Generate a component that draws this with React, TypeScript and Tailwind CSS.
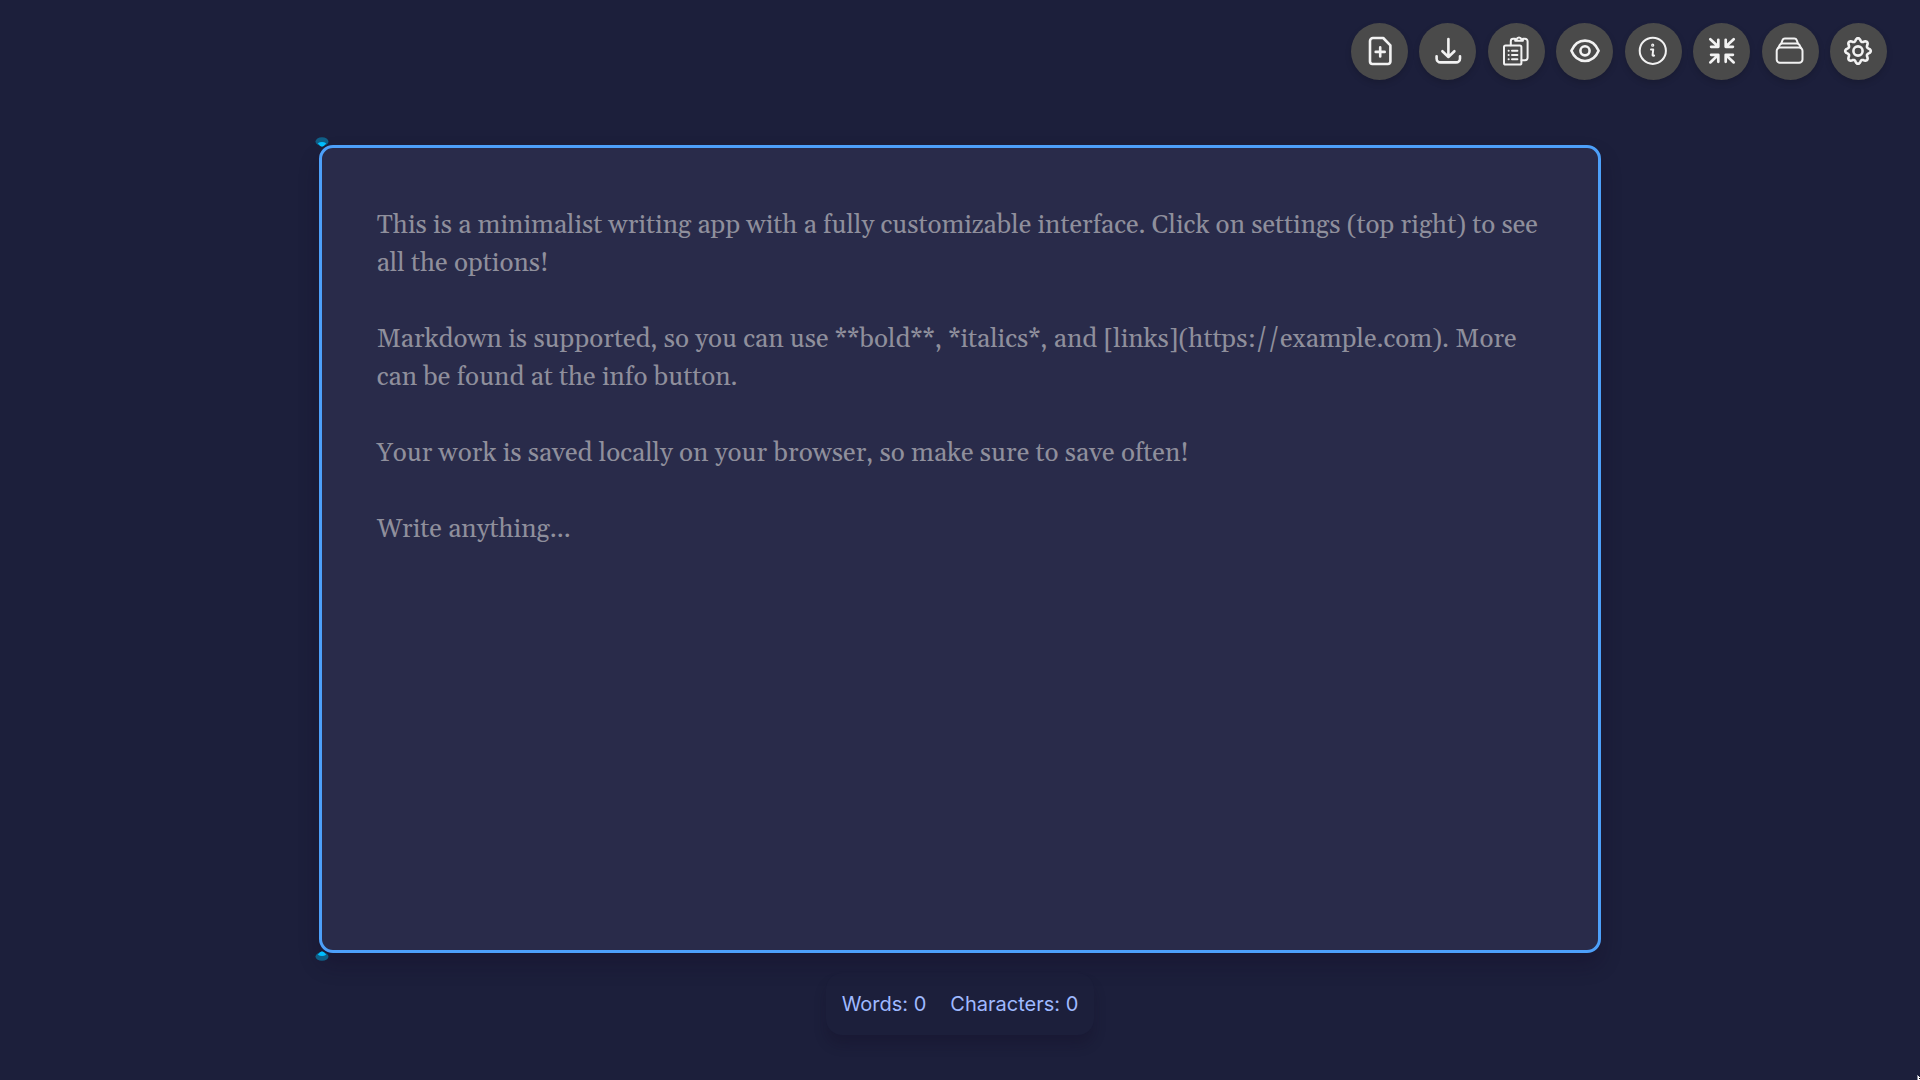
import { useState, type ReactNode } from "react";

const PLACEHOLDER = `This is a minimalist writing app with a fully customizable interface. Click on settings (top right) to see all the options!

Markdown is supported, so you can use **bold**, *italics*, and [links](https://example.com). More can be found at the info button.

Your work is saved locally on your browser, so make sure to save often!

Write anything...`;

// Outline of an eight-toothed gear centred on (16, 16).
const gearPath =
  Array.from({ length: 96 }, (_, i) => {
    const a = (i / 96) * Math.PI * 2;
    const wave = Math.cos(a * 8);
    const r = 11.3 + 1.5 * Math.sign(wave) * Math.pow(Math.abs(wave), 0.8);
    return `${i ? "L" : "M"}${(16 + r * Math.sin(a)).toFixed(2)} ${(16 - r * Math.cos(a)).toFixed(2)}`;
  }).join("") + "Z";

const tools: { label: string; stroke: number; icon: ReactNode }[] = [
  {
    label: "New document",
    stroke: 2.6,
    icon: (
      <>
        <path d="M9 3h10.2L26.4 10.4V26.6a2.4 2.4 0 0 1-2.4 2.4H8.4A2.4 2.4 0 0 1 6 26.6V6a3 3 0 0 1 3-3Z" />
        <path d="M16.2 12.4v9M11.7 16.9h9" />
      </>
    ),
  },
  {
    label: "Download",
    stroke: 2.6,
    icon: (
      <>
        <path d="M16.4 4v17.6M10.4 16.2l6 5.8 6-5.8" />
        <path d="M4.6 21.2v2.2a4 4 0 0 0 4 4h15.4a4 4 0 0 0 4-4v-2.2" />
      </>
    ),
  },
  {
    label: "Copy",
    stroke: 2,
    icon: (
      <>
        <rect x="4" y="10.4" width="17.4" height="19.2" rx="1.6" />
        <path d="M10.8 10.2V6.2a2.4 2.4 0 0 1 2.4-2.4h2M23 3.8h2a2.6 2.6 0 0 1 2.6 2.6v16.2a2.6 2.6 0 0 1-2.6 2.6h-3.4" />
        <path d="M15.2 5.8V4.4h1.4a2.5 2.5 0 0 1 4.8 0h1.5v1.4Z" />
        <path d="M8.6 15.8h.1M8.6 19.9h.1M8.6 24.2h.1M12 15.8h5.4M12 19.9h5.4M12 24.2h5.4" />
      </>
    ),
  },
  {
    label: "Preview",
    stroke: 2.6,
    icon: (
      <>
        <path d="M2.4 15.8C5 9.6 9.8 5.6 16 5.6S27 9.6 29.6 15.8C27 22 22.2 26 16 26S5 22 2.4 15.8Z" />
        <circle cx="16" cy="15.8" r="4.6" />
      </>
    ),
  },
  {
    label: "Info",
    stroke: 2,
    icon: (
      <>
        <circle cx="15.8" cy="15.8" r="13.1" />
        <path d="M14 14.6h2.2l-.6 5.4q-.1 1.1 1.5.5" />
        <circle cx="15.7" cy="10.2" r=".6" />
      </>
    ),
  },
  {
    label: "Focus mode",
    stroke: 2.7,
    icon: (
      <>
        <path d="M4.3 4.2l7.8 7.4M12.3 4.8v7H5.1" />
        <path d="M27.7 4.2l-7.8 7.4M19.7 4.8v7h7.2" />
        <path d="M4.3 27.4l7.8-7.4M12.3 26.8v-7H5.1" />
        <path d="M27.7 27.4l-7.8-7.4M19.7 26.8v-7h7.2" />
      </>
    ),
  },
  {
    label: "Library",
    stroke: 2,
    icon: (
      <>
        <rect x="2.7" y="12.4" width="25.8" height="15.4" rx="3.4" />
        <path d="M4.1 13.2L5.9 9.8a2.6 2.6 0 0 1 2.4-1.4h14.6a2.6 2.6 0 0 1 2.4 1.4l1.8 3.4" />
        <path d="M7.3 8.4l1.2-3.2a2.5 2.5 0 0 1 2.3-1.6h9.6a2.5 2.5 0 0 1 2.3 1.6l1.2 3.2" />
      </>
    ),
  },
  {
    label: "Settings",
    stroke: 2.6,
    icon: (
      <>
        <path d={gearPath} />
        <circle cx="16" cy="16" r="4.6" />
      </>
    ),
  },
];

function Handle({ flipped = false }: { flipped?: boolean }) {
  return (
    <svg
      aria-hidden="true"
      viewBox="0 0 14 10"
      className={
        flipped
          ? "absolute -bottom-2 -left-1 h-[10px] w-[14px] rotate-180"
          : "absolute -top-2 -left-1 h-[10px] w-[14px]"
      }
    >
      <ellipse cx="7" cy="4.5" rx="6.5" ry="4.3" fill="#0f5f87" />
      <path d="M2.8 6.3Q7 3.6 11.2 6.3Q9 9.6 7 9.8Q5 9.6 2.8 6.3Z" fill="#00bfff" />
    </svg>
  );
}

export default function App() {
  const [text, setText] = useState("");
  const words = text.trim() ? text.trim().split(/\s+/).length : 0;

  return (
    <div className="relative flex min-h-screen flex-col items-center bg-[#1c1f3b] font-['Inter',sans-serif]">
      <header className="flex w-full justify-end pt-[23px] pr-[33px]">
        <nav aria-label="Tools" className="flex w-[536px] justify-between">
          {tools.map((tool) => (
            <button
              key={tool.label}
              type="button"
              aria-label={tool.label}
              className="flex size-[57px] items-center justify-center rounded-full bg-[#4a4a4a] pb-px text-[#f2f2f2] shadow-[0_3px_6px_rgba(0,0,0,0.15)]"
            >
              <svg
                viewBox="0 0 32 32"
                className="size-8"
                fill="none"
                stroke="currentColor"
                strokeWidth={tool.stroke}
                strokeLinecap="round"
                strokeLinejoin="round"
              >
                {tool.icon}
              </svg>
            </button>
          ))}
        </nav>
      </header>

      <main className="relative mt-[65px] flex h-[74.8vh] w-[66.8%]">
        <textarea
          aria-label="Document"
          value={text}
          onChange={(e) => setText(e.target.value)}
          placeholder={PLACEHOLDER}
          className="w-full resize-none rounded-[14px] border-3 border-[#4da0fa] bg-[#292b4a] px-[55px] pt-[59px] pb-[55px] font-['Georgia','Gelasio','Liberation_Serif',serif] text-[26px] leading-[38px] text-gray-200 shadow-[0_12px_20px_rgba(20,10,35,0.3)] outline-none placeholder:text-[#8f8f9c]"
        />
        <Handle />
        <Handle flipped />
      </main>

      <footer className="mt-5 flex gap-6 rounded-2xl bg-[#1c1f3b] px-4 py-4 text-[20px] leading-[30px] text-[#9fb9ff] shadow-[0_10px_12px_rgba(20,10,35,0.25)]">
        <span>Words: {words}</span>
        <span>Characters: {text.length}</span>
      </footer>

      <svg aria-hidden="true" viewBox="0 0 3 5" className="absolute right-0 bottom-0 h-[5px] w-[3px]">
        <path d="M0 0h1v5h-1Z" fill="#8d8fa0" />
        <path d="M1 1h1v1h1v3h-2Z" fill="#fff" />
        <path d="M2 3h1v1h-1Z" fill="#000" />
      </svg>
    </div>
  );
}
